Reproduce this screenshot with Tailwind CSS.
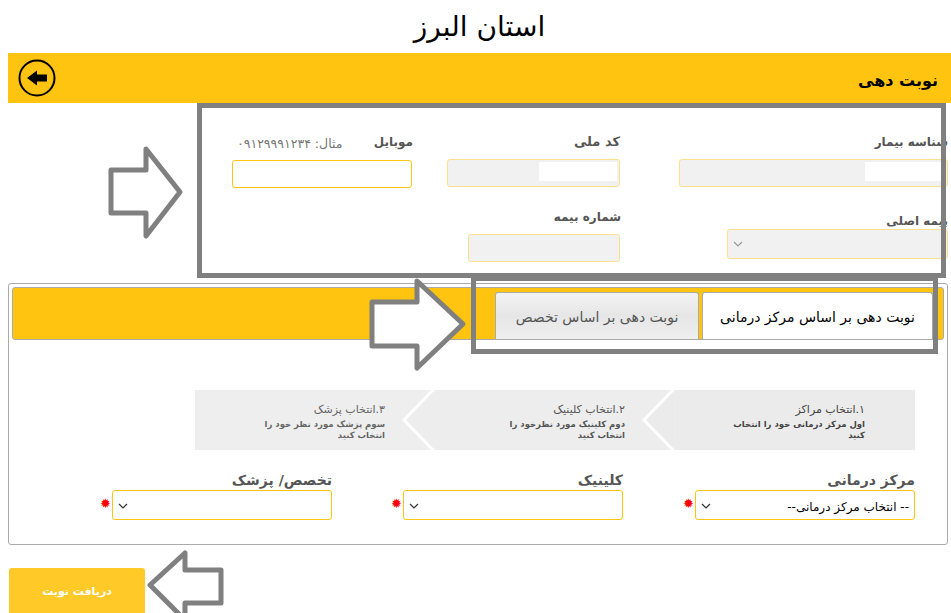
<!DOCTYPE html>
<html lang="fa" dir="rtl">
<head>
  <meta charset="UTF-8" />
  <title>نوبت دهی</title>
  <script src="https://cdn.jsdelivr.net/npm/@tailwindcss/browser@4"></script>
</head>
<body class="bg-white font-['DejaVu_Sans',sans-serif] text-[#555]">
<div class="relative w-[951px] h-[613px] overflow-hidden pr-2">

  <!-- page title -->
  <h1 class="h-[53px] ml-[8px] mr-[-8px] text-center text-[28px] leading-[54px] text-black font-normal">استان البرز</h1>

  <!-- yellow title bar -->
  <div class="flex items-center justify-between h-[50px] bg-[#ffc40f] mr-[-8px] ml-[8px] pr-[13px] pl-[10px]">
    <h2 class="text-[16px] font-bold text-black pt-[5px]">نوبت دهی</h2>
    <svg width="38" height="38" viewBox="0 0 38 38" fill="none">
      <circle cx="19" cy="19" r="17.5" stroke="#000" stroke-width="2"/>
      <path d="M9 19 L19 11.5 V15.5 H29 V22.5 H19 V26.5 Z" fill="#000"/>
    </svg>
  </div>

  <!-- patient form -->
  <div class="h-[180px] mr-[-5px] pt-[29px]">
    <div class="flex h-[68px]">
      <div class="w-[269px] ml-[59px]">
        <label class="block text-[12px] font-bold leading-[20px] h-[27px]">شناسه بیمار</label>
        <div class="relative">
          <input disabled class="block w-full h-[28px] rounded-[3px] border border-[#fbe08e] bg-[#f1f1f1]" />
          <div class="absolute top-[3px] right-[3px] w-[80px] h-[19px] bg-white"></div>
        </div>
      </div>
      <div class="w-[173px] ml-[35px]">
        <label class="block text-[13px] font-bold leading-[20px] h-[27px]">کد ملی</label>
        <div class="relative">
          <input disabled class="block w-full h-[28px] rounded-[3px] border border-[#fbe08e] bg-[#f1f1f1]" />
          <div class="absolute top-[3px] right-[3px] w-[78px] h-[19px] bg-white"></div>
        </div>
      </div>
      <div class="w-[180px]">
        <div class="flex justify-between h-[28px] leading-[20px]">
          <label class="text-[12px] font-bold mr-[-1px]">موبایل</label>
          <span class="text-[12.5px] text-[#777] mt-[2px] ml-[5px]">مثال: ۰۹۱۲۹۹۹۱۲۳۴</span>
        </div>
        <input class="block w-full h-[28px] rounded-[3px] border border-[#ffc40f] bg-white" />
      </div>
    </div>
    <div class="flex mt-[4px]">
      <div class="w-[221px] ml-[107px]">
        <label class="block text-[12px] font-bold leading-[20px] h-[26px] mt-[7px] mb-[-8px]">بیمه اصلی</label>
        <div class="relative">
          <select disabled class="block w-full h-[30px] appearance-none rounded-[3px] border border-[#fbe08e] bg-[#f1f1f1]"></select>
          <svg class="absolute left-[6px] top-[12px]" width="10" height="6" viewBox="0 0 10 6" fill="none"><path d="M1 1 L5 5 L9 1" stroke="#999" stroke-width="1.2"/></svg>
        </div>
      </div>
      <div class="w-[152px]">
        <label class="block text-[12px] font-bold leading-[20px] h-[29px] mt-[1px] pt-[2px] mr-[-1px]">شماره بیمه</label>
        <input disabled class="block w-full h-[28px] rounded-[3px] border border-[#fbe08e] bg-[#f1f1f1]" />
      </div>
    </div>
  </div>

  <!-- booking panel -->
  <div class="h-[262px] w-[940px] border border-[#aaa] rounded-[3px] p-[3px] mr-[-5px]">
    <div class="flex items-end h-[53px] bg-[#ffc40f] border border-[#aaa] rounded-[3px] pr-[10px]">
      <div class="w-[231px] h-[47px] bg-white border border-b-0 border-[#aaa] rounded-t-[3px] text-[14px] leading-[48px] text-center text-black">نوبت دهی بر اساس مرکز درمانی</div>
      <div class="w-[204px] h-[47px] mr-[3px] bg-gradient-to-b from-[#f2f2f2] via-[#e6e6e6] to-[#efefef] border border-b-0 border-[#aaa] rounded-t-[3px] text-[14px] leading-[48px] text-center text-[#555]">نوبت دهی بر اساس تخصص</div>
    </div>

    <!-- steps -->
    <div class="flex w-[720px] h-[60px] mt-[50px] mr-[29px]">
      <div class="w-[240px] bg-[#ebebeb] pr-[50px] pt-[12px] text-[#444]">
        <div class="text-[11px] leading-[15px]">۱.انتخاب مراکز</div>
        <div class="w-[136px] text-[8.5px] font-bold leading-[11px] mt-[2px]">اول مرکز درمانی خود را انتخاب کنید</div>
      </div>
      <div class="relative w-[240px] bg-[#ededed] pr-[50px] pt-[12px] text-[#555]">
        <svg class="absolute top-0 right-0" width="33" height="60" viewBox="0 0 33 60" fill="#ebebeb"><path d="M32 -1 L2 30 L32 61" stroke="#fff" stroke-width="3"/></svg>
        <div class="text-[11px] leading-[15px]">۲.انتخاب کلینیک</div>
        <div class="w-[136px] text-[8.5px] font-bold leading-[11px] mt-[2px]">دوم کلینیک مورد نظرخود را انتخاب کنید</div>
      </div>
      <div class="relative w-[240px] bg-[#eeeeee] pr-[50px] pt-[12px] text-[#666]">
        <svg class="absolute top-0 right-0" width="33" height="60" viewBox="0 0 33 60" fill="#ededed"><path d="M32 -1 L2 30 L32 61" stroke="#fff" stroke-width="3"/></svg>
        <div class="text-[11px] leading-[15px]">۳.انتخاب پزشک</div>
        <div class="w-[136px] text-[8.5px] font-bold leading-[11px] mt-[2px]">سوم پزشک مورد نظر خود را انتخاب کنید</div>
      </div>
    </div>

    <!-- selects -->
    <div class="flex mt-[20px] mr-[29px]">
      <div class="w-[220px] ml-[72px] relative">
        <label class="block text-[14px] font-bold leading-[20px]">مرکز درمانی</label>
        <select class="block w-full h-[30px] appearance-none rounded-[3px] border border-[#ffc40f] bg-white text-[12px] text-black pr-[5px] pt-[3px]"><option>-- انتخاب مرکز درمانی--</option></select>
        <svg class="absolute left-[6px] top-[33px]" width="10" height="6" viewBox="0 0 10 6" fill="none"><path d="M1 1 L5 5 L9 1" stroke="#333" stroke-width="1.2"/></svg>
        <span class="absolute left-[-12px] top-[27px] text-[13px] leading-[14px] text-[#f00]">✹</span>
      </div>
      <div class="w-[220px] ml-[71px] relative">
        <label class="block text-[14px] font-bold leading-[20px]">کلینیک</label>
        <select class="block w-full h-[30px] appearance-none rounded-[3px] border border-[#ffc40f] bg-white"></select>
        <svg class="absolute left-[6px] top-[33px]" width="10" height="6" viewBox="0 0 10 6" fill="none"><path d="M1 1 L5 5 L9 1" stroke="#333" stroke-width="1.2"/></svg>
        <span class="absolute left-[-12px] top-[27px] text-[13px] leading-[14px] text-[#f00]">✹</span>
      </div>
      <div class="w-[220px] relative">
        <label class="block text-[14px] font-bold leading-[20px]">تخصص/ پزشک</label>
        <select class="block w-full h-[30px] appearance-none rounded-[3px] border border-[#ffc40f] bg-white"></select>
        <svg class="absolute left-[6px] top-[33px]" width="10" height="6" viewBox="0 0 10 6" fill="none"><path d="M1 1 L5 5 L9 1" stroke="#333" stroke-width="1.2"/></svg>
        <span class="absolute left-[-12px] top-[27px] text-[13px] leading-[14px] text-[#f00]">✹</span>
      </div>
    </div>
  </div>

  <!-- submit -->
  <div class="flex justify-end mt-[23px]">
    <button class="w-[136px] h-[48px] ml-[9px] bg-[#ffca28] rounded-[3px] text-white text-[11px] font-bold">دریافت نوبت</button>
  </div>

  <!-- annotation overlays drawn on top of the screenshot -->
  <div class="absolute left-[197px] top-[103px] w-[749px] h-[175px] border-[5px] border-[#808080]"></div>
  <div class="absolute left-[471px] top-[276px] w-[467px] h-[78px] border-[5px] border-[#808080]"></div>
  <svg class="absolute left-0 top-0" width="951" height="613" fill="#fff" stroke="#808080" stroke-width="5" stroke-linejoin="round">
    <path d="M111 170 H146 V149 L180 192 L146 236 V213 H111 Z"/>
    <path d="M372 302 H417 V281 L463 324 L417 368 V346 H372 Z"/>
    <path d="M150 585 L185 553 V570 H221 V603 H185 V620 Z"/>
  </svg>
</div>
</body>
</html>
